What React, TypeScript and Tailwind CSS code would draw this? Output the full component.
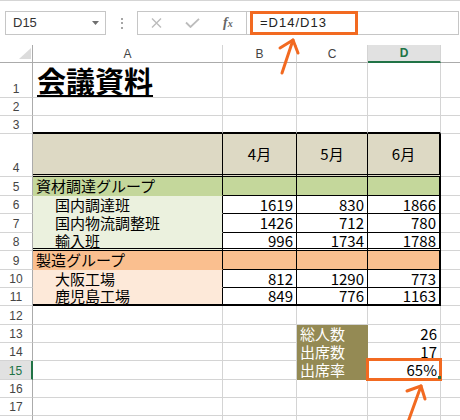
import React from "react";

const CJK = "font-['Noto_Sans_CJK_JP',sans-serif]";
const SANS = "font-['Liberation_Sans',Arial,sans-serif]";

// border presets: gridline / black / hidden / thick / double
const GB = "border-b border-b-[#d4d4d4]";
const GR = "border-r border-r-[#d4d4d4]";
const KB = "border-b border-b-black";
const KR = "border-r border-r-black";
const TB = "border-b border-b-transparent";
const TR = "border-r border-r-transparent";
const HB = "border-b-2 border-b-black";
const HR = "border-r-2 border-r-black";
const DB = "border-b-[3px] border-b-black [border-bottom-style:double]";

const TAN = "bg-[#ddd9c4]";
const GRN = "bg-[#c4d79b]";
const LGRN = "bg-[#ebf1de]";
const ORG = "bg-[#fabf8f]";
const LORG = "bg-[#fde9d9]";
const OLIVE = "bg-[#948a54]";

const W = ["w-[190px]", "w-[74px]", "w-[71px]", "w-[73px]"];

type C = { t?: string; bg?: string; b?: string; r?: string; x?: string };
type R = { n: number; h: string; sel?: boolean; cells: C[] };

const num = (t: string, b = KB, r = KR): C => ({ t, b, r, x: "justify-end pr-[3px]" });
const empty = (): C[] => [{}, {}, {}, {}];

const rows: R[] = [
  {
    n: 1,
    h: "h-[35px]",
    cells: [
      { t: "会議資料", x: "items-end pl-[4px] pb-[1px] text-[29px] font-bold underline decoration-2 underline-offset-[2px] leading-[31px]" },
      {},
      {},
      {},
    ],
  },
  { n: 2, h: "h-[18px]", cells: empty() },
  { n: 3, h: "h-[18px]", cells: [{ b: HB }, { b: HB }, { b: HB }, { b: HB }] },
  {
    n: 4,
    h: "h-[43px]",
    cells: [
      { bg: TAN, b: DB, r: KR },
      { t: "4月", bg: TAN, b: DB, r: KR, x: "justify-center" },
      { t: "5月", bg: TAN, b: DB, r: KR, x: "justify-center" },
      { t: "6月", bg: TAN, b: DB, r: HR, x: "justify-center" },
    ],
  },
  {
    n: 5,
    h: "h-[19px]",
    cells: [
      { t: "資材調達グループ", bg: GRN, b: TB, r: KR, x: "pl-[3px]" },
      { bg: GRN, b: KB, r: KR },
      { bg: GRN, b: KB, r: KR },
      { bg: GRN, b: KB, r: HR },
    ],
  },
  {
    n: 6,
    h: "h-[18px]",
    cells: [{ t: "国内調達班", bg: LGRN, b: TB, r: KR, x: "pl-[22px]" }, num("1619"), num("830"), num("1866", KB, HR)],
  },
  {
    n: 7,
    h: "h-[19px]",
    cells: [{ t: "国内物流調整班", bg: LGRN, b: TB, r: KR, x: "pl-[22px]" }, num("1426"), num("712"), num("780", KB, HR)],
  },
  {
    n: 8,
    h: "h-[18px]",
    cells: [{ t: "輸入班", bg: LGRN, b: DB, r: KR, x: "pl-[22px]" }, num("996", DB), num("1734", DB), num("1788", DB, HR)],
  },
  {
    n: 9,
    h: "h-[19px]",
    cells: [
      { t: "製造グループ", bg: ORG, b: TB, r: KR, x: "pl-[3px]" },
      { bg: ORG, b: KB, r: KR },
      { bg: ORG, b: KB, r: KR },
      { bg: ORG, b: KB, r: HR },
    ],
  },
  {
    n: 10,
    h: "h-[18px]",
    cells: [{ t: "大阪工場", bg: LORG, b: TB, r: KR, x: "pl-[22px]" }, num("812"), num("1290"), num("773", KB, HR)],
  },
  {
    n: 11,
    h: "h-[18px]",
    cells: [{ t: "鹿児島工場", bg: LORG, b: HB, r: KR, x: "pl-[22px]" }, num("849", HB), num("776", HB), num("1163", HB, HR)],
  },
  { n: 12, h: "h-[19px]", cells: empty() },
  {
    n: 13,
    h: "h-[18px]",
    cells: [{}, {}, { t: "総人数", bg: OLIVE, b: TB, r: TR, x: "pl-[3px] text-white" }, num("26", GB, GR)],
  },
  {
    n: 14,
    h: "h-[18px]",
    cells: [{}, {}, { t: "出席数", bg: OLIVE, b: TB, r: TR, x: "pl-[3px] text-white" }, num("17", GB, GR)],
  },
  {
    n: 15,
    h: "h-[19px]",
    sel: true,
    cells: [{}, {}, { t: "出席率", bg: OLIVE, b: TB, r: TR, x: "pl-[3px] text-white" }, num("65%", GB, GR)],
  },
  { n: 16, h: "h-[18px]", cells: empty() },
  { n: 17, h: "h-[18px]", cells: empty() },
  { n: 18, h: "h-[18px]", cells: empty() },
];

function Cell({ w, c }: { w: string; c: C }) {
  return (
    <div
      className={`${w} shrink-0 h-full box-border flex items-center whitespace-nowrap leading-[16px] ${c.bg ?? ""} ${c.b ?? GB} ${c.r ?? GR} ${c.x ?? ""}`}
    >
      {c.t}
    </div>
  );
}

function Toolbar() {
  return (
    <div className="h-[45px] box-border border-t border-t-[#d5d5d5] flex items-start pt-[10px] pl-[5px]">
      <div className="w-[101px] h-[24px] box-border border border-[#c6c6c6] flex items-center justify-between pl-[7px] pr-[6px]">
        <span className={`${SANS} text-[13px] text-[#333]`}>D15</span>
        <svg width="7" height="4" viewBox="0 0 7 4">
          <path d="M0 0 L7 0 L3.5 4 Z" fill="#6f6f6f" />
        </svg>
      </div>
      <div className="w-[31px] h-[24px] flex flex-col items-center justify-center gap-[2.5px]">
        <span className="w-[2px] h-[2px] bg-[#a6a6a6]" />
        <span className="w-[2px] h-[2px] bg-[#a6a6a6]" />
        <span className="w-[2px] h-[2px] bg-[#a6a6a6]" />
      </div>
      <div className="w-[322px] h-[24px] box-border border border-[#c6c6c6] flex">
        <div className="w-[109px] h-full box-border border-r border-r-[#c6c6c6] flex items-center pl-[13px] gap-[23px]">
          <svg width="11" height="10" viewBox="0 0 11 10">
            <path d="M1 0.5 L10 9.5 M10 0.5 L1 9.5" stroke="#bcbcbc" strokeWidth="1.4" fill="none" />
          </svg>
          <svg width="15" height="10" viewBox="0 0 15 10">
            <path d="M1 4.5 L5.5 9 L14 0.8" stroke="#bcbcbc" strokeWidth="1.8" fill="none" />
          </svg>
          <span className="font-['Liberation_Serif',serif] italic font-bold text-[14px] text-[#666] leading-none">
            f<span className="text-[10px]">x</span>
          </span>
        </div>
        <div className={`flex-1 flex items-center pl-[13px] ${SANS} text-[13px] tracking-[1px] text-[#222]`}>=D14/D13</div>
      </div>
    </div>
  );
}

function HeaderRow() {
  const cols = ["A", "B", "C", "D"];
  return (
    <div className={`flex h-[18px] ${SANS} text-[12px] text-[#444]`}>
      <div className="w-[33px] shrink-0 h-full box-border border-b border-b-[#ababab] border-r border-r-[#ababab] flex items-end justify-end pr-[1px] pb-[3px]">
        <svg width="12" height="11" viewBox="0 0 12 11">
          <path d="M12 0 L12 11 L0 11 Z" fill="#dcdcdc" />
        </svg>
      </div>
      {cols.map((c, i) =>
        c === "D" ? (
          <div
            key={c}
            className={`${W[i]} shrink-0 h-full box-border border-b-2 border-b-[#217346] border-r border-r-[#d4d4d4] bg-[#e1e1e1] text-[#217346] font-bold flex items-center justify-center`}
          >
            {c}
          </div>
        ) : (
          <div
            key={c}
            className={`${W[i]} shrink-0 h-full box-border border-b border-b-[#ababab] border-r border-r-[#d4d4d4] flex items-center justify-center`}
          >
            {c}
          </div>
        )
      )}
      <div className="flex-1 h-full box-border border-b border-b-[#ababab]" />
    </div>
  );
}

function Sheet() {
  return (
    <div className={`${CJK} text-[15px] text-black`}>
      {rows.map((r) => (
        <div key={r.n} className={`flex ${r.h}`}>
          <div
            className={`w-[33px] shrink-0 h-full box-border border-b border-b-[#d4d4d4] flex items-end justify-center pb-[1px] ${SANS} text-[12px] leading-[14px] ${
              r.sel ? "border-r-2 border-r-[#217346] bg-[#e1e1e1] text-[#217346]" : "border-r border-r-[#ababab] text-[#444]"
            }`}
          >
            {r.n}
          </div>
          {r.cells.map((c, i) => (
            <Cell key={i} w={W[i]} c={c} />
          ))}
          <div className="flex-1 h-full box-border border-b border-b-[#d4d4d4]" />
        </div>
      ))}
    </div>
  );
}

export default function App() {
  return (
    <div className="relative w-[460px] h-[420px] overflow-hidden bg-white">
      <Toolbar />
      <HeaderRow />
      <Sheet />

      {/* annotations */}
      <div className="absolute left-[250px] top-[11px] w-[108px] h-[24px] box-border border-[3px] border-[#f26a21]" />
      <div className="absolute left-[366px] top-[358px] w-[76px] h-[23px] box-border border-[3px] border-[#f26a21]" />
      <div className="absolute left-[438px] top-[376px] w-[3px] h-[3px] bg-[#217346]" />
      <svg className="absolute left-0 top-0 pointer-events-none" width="460" height="420" viewBox="0 0 460 420">
        <g stroke="#f26a21" strokeWidth="3" strokeLinecap="round" strokeLinejoin="round" fill="none">
          <path d="M282 73 L293 40" />
          <path d="M280 48 L293 40 L298 53" />
          <path d="M408 422 L421 386" />
          <path d="M407 391 L421 386 L425 399" />
        </g>
      </svg>
    </div>
  );
}
